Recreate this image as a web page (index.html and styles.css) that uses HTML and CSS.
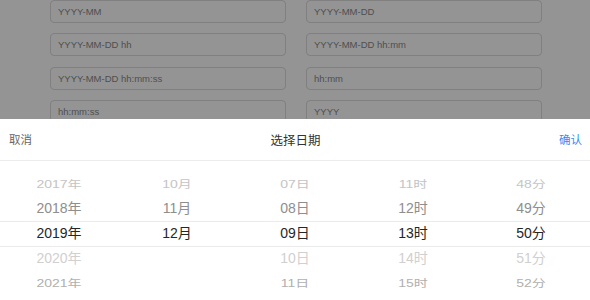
FILE: index.html
```html
<!DOCTYPE html>
<html lang="zh-CN">
<head>
<meta charset="utf-8">
<title>选择日期</title>
<link rel="stylesheet" href="styles.css">
</head>
<body>
<div class="page">
  <div class="form">
    <div class="field">YYYY-MM</div>
    <div class="field">YYYY-MM-DD</div>
    <div class="field">YYYY-MM-DD hh</div>
    <div class="field">YYYY-MM-DD hh:mm</div>
    <div class="field">YYYY-MM-DD hh:mm:ss</div>
    <div class="field">hh:mm</div>
    <div class="field">hh:mm:ss</div>
    <div class="field">YYYY</div>
  </div>
</div>
<div class="mask"></div>
<div class="popup">
  <div class="header">
    <span class="btn cancel">取消</span>
    <span class="title">选择日期</span>
    <span class="btn confirm">确认</span>
  </div>
  <div class="picker">
    <div class="col">
      <div class="item far-top"><span>2017年</span></div>
      <div class="item near">2018年</div>
      <div class="item sel">2019年</div>
      <div class="item near-bottom">2020年</div>
      <div class="item far-bottom"><span>2021年</span></div>
    </div>
    <div class="col">
      <div class="item far-top"><span>10月</span></div>
      <div class="item near">11月</div>
      <div class="item sel">12月</div>
      <div class="item near-bottom"></div>
      <div class="item far-bottom"></div>
    </div>
    <div class="col">
      <div class="item far-top"><span>07日</span></div>
      <div class="item near">08日</div>
      <div class="item sel">09日</div>
      <div class="item near-bottom">10日</div>
      <div class="item far-bottom"><span>11日</span></div>
    </div>
    <div class="col">
      <div class="item far-top"><span>11时</span></div>
      <div class="item near">12时</div>
      <div class="item sel">13时</div>
      <div class="item near-bottom">14时</div>
      <div class="item far-bottom"><span>15时</span></div>
    </div>
    <div class="col">
      <div class="item far-top"><span>48分</span></div>
      <div class="item near">49分</div>
      <div class="item sel">50分</div>
      <div class="item near-bottom">51分</div>
      <div class="item far-bottom"><span>52分</span></div>
    </div>
    <div class="band"></div>
  </div>
</div>
</body>
</html>
```
FILE: styles.css
```css
* { box-sizing: border-box; }
html, body {
  margin: 0;
  padding: 0;
  width: 590px;
  height: 300px;
  overflow: hidden;
  font-family: "Liberation Sans", "Noto Sans CJK SC", sans-serif;
  background: #fff;
}
.page {
  padding: 0 48px 0 50px;
}
.form {
  display: grid;
  grid-template-columns: 236px 236px;
  column-gap: 20px;
  row-gap: 10.6px;
}
.field {
  height: 22.8px;
  border: 1px solid #dcdcdc;
  border-radius: 4px;
  padding: 0 7px;
  font-size: 9.5px;
  line-height: 21px;
  color: #8a8a8a;
  background: #fff;
}
.mask {
  position: fixed;
  inset: 0;
  background: rgba(0, 0, 0, 0.42);
}
.popup {
  position: fixed;
  left: 0;
  right: 0;
  bottom: 0;
  height: 181px;
  background: #fff;
  overflow: hidden;
}
.header {
  height: 42px;
  border-bottom: 1px solid #ececec;
  display: flex;
  align-items: center;
  justify-content: space-between;
  padding: 0 8px 1px 9px;
}
.btn { font-size: 11.5px; }
.cancel { color: #666; }
.confirm { color: #2f8df4; }
.title { font-size: 12.5px; color: #333; }
.picker {
  position: relative;
  display: grid;
  grid-template-columns: repeat(5, 1fr);
  padding-top: 10.5px;
}
.col {
  display: flex;
  flex-direction: column;
  align-items: center;
}
.item {
  height: 24.75px;
  line-height: 24.75px;
  font-size: 14px;
  text-align: center;
  white-space: nowrap;
}
.item span {
  display: inline-block;
  transform: scaleY(0.72);
}
.far-top { color: #c4c4c4; }
.near { color: #8e8e8e; }
.sel { color: #262626; }
.near-bottom { color: #d0d0d0; }
.far-bottom { color: #b0b0b0; }
.band {
  position: absolute;
  left: 0;
  right: 0;
  top: 60px;
  height: 25.5px;
  border-top: 1px solid #ebebeb;
  border-bottom: 1px solid #ebebeb;
  pointer-events: none;
}
```
